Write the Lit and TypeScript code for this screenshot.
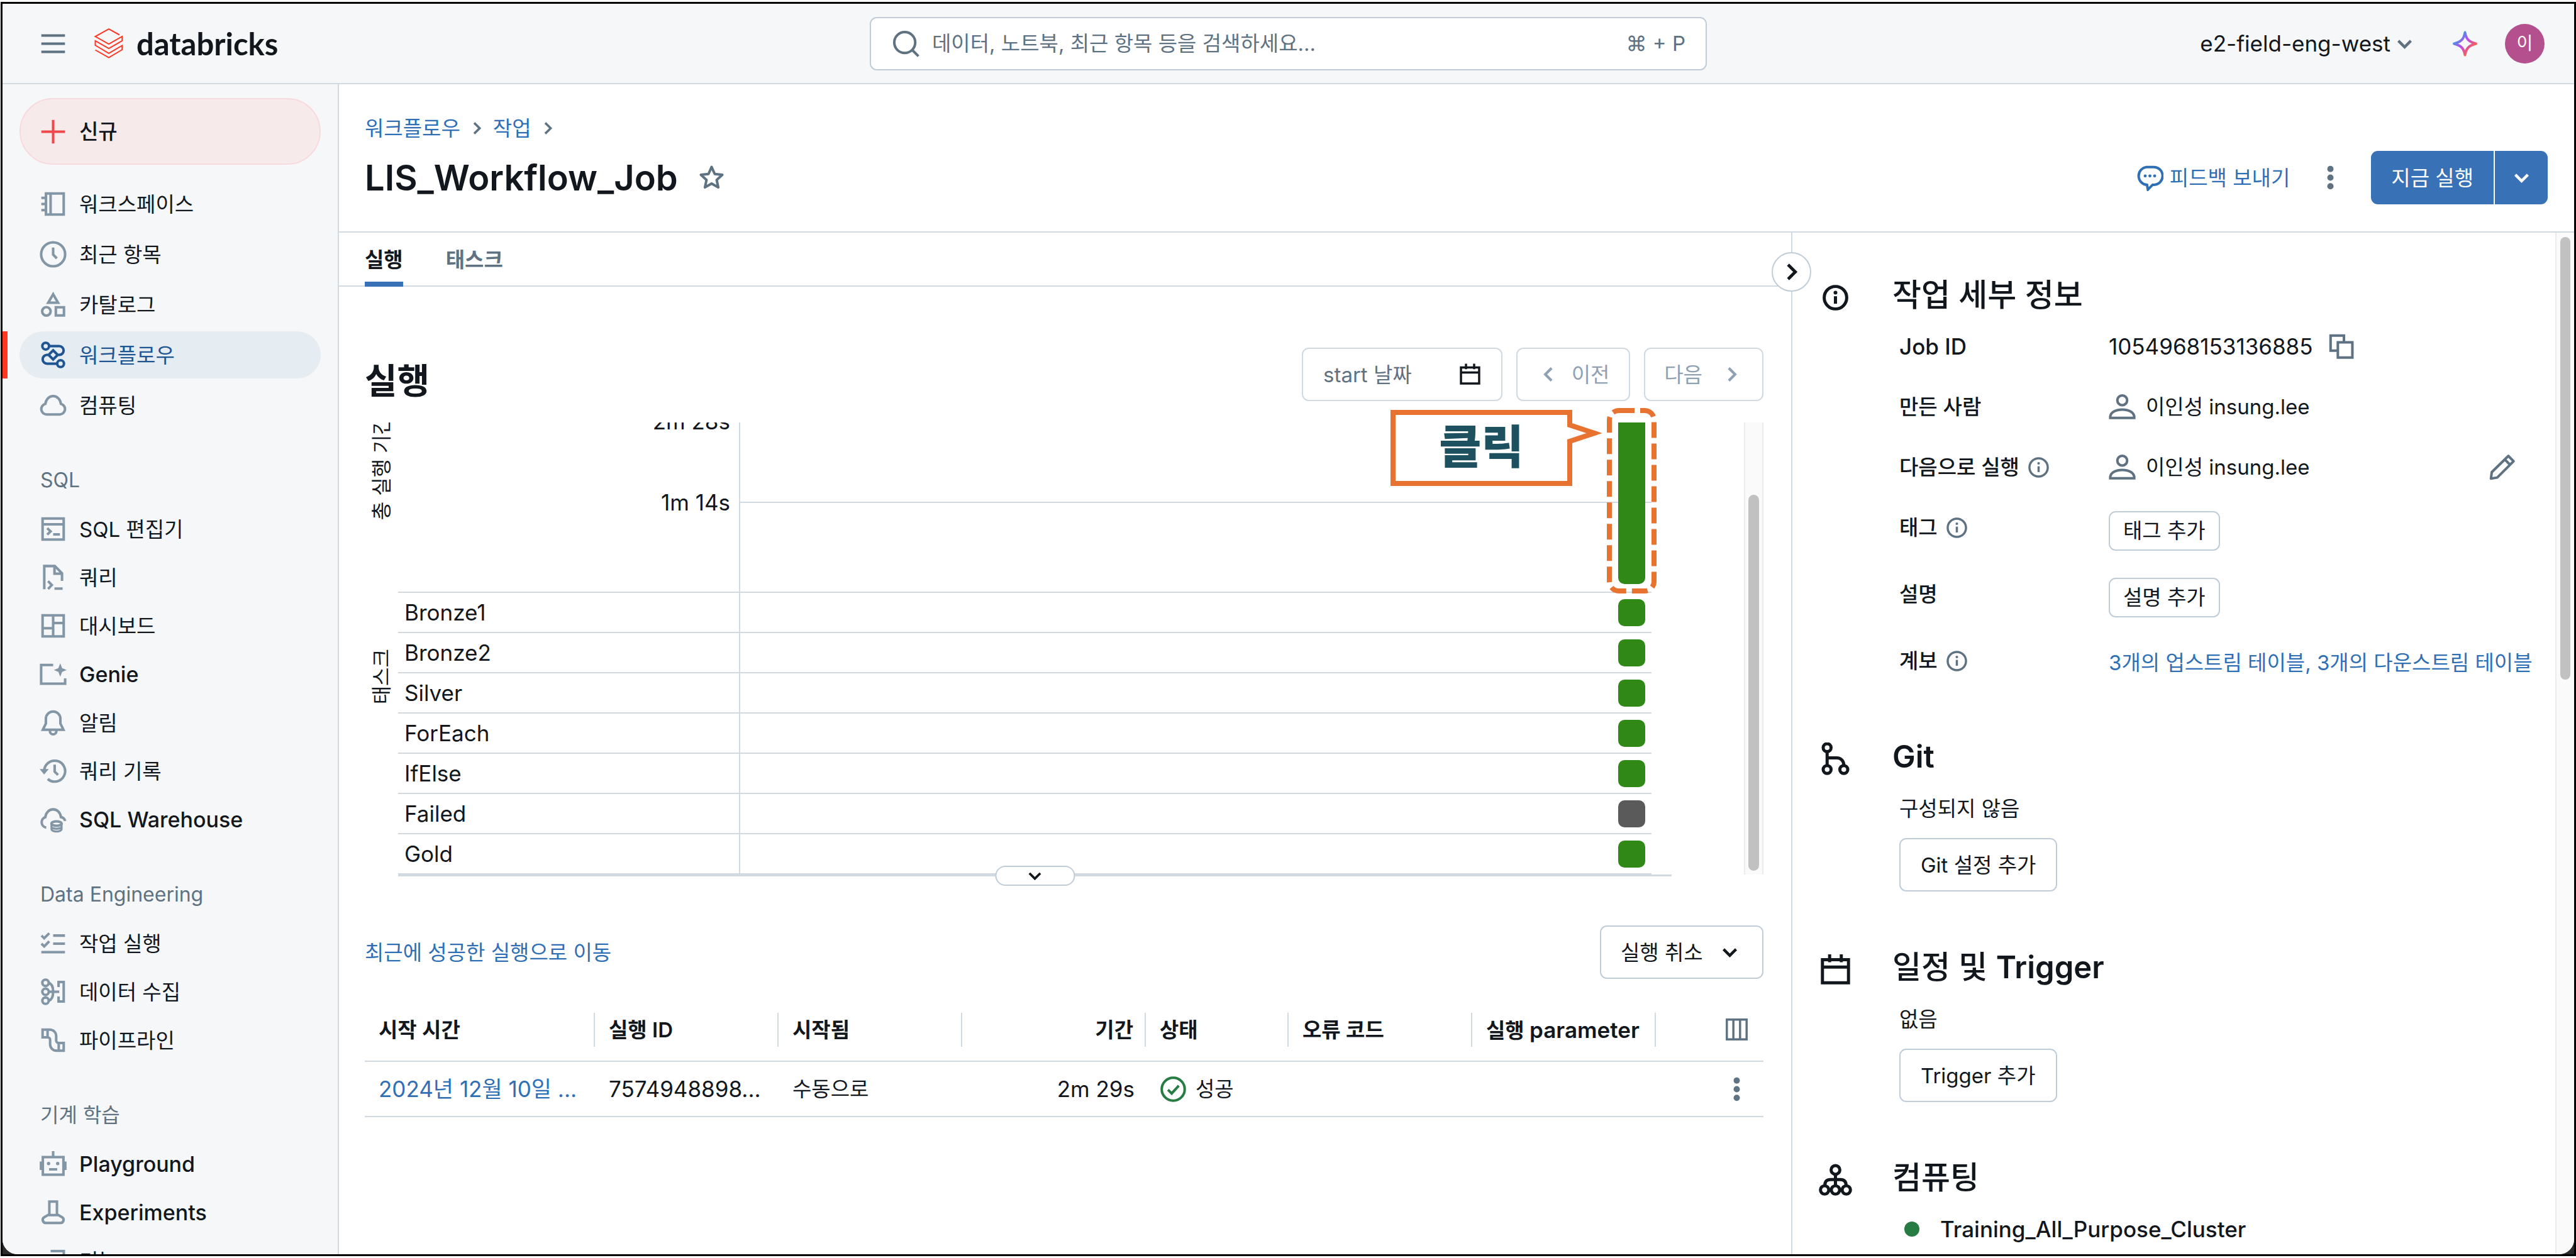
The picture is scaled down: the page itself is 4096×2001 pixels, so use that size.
import { LitElement, html, css, svg, nothing, TemplateResult } from "lit";
import { customElement } from "lit/decorators.js";
import { classMap } from "lit/directives/class-map.js";

const ICONS: Record<string, TemplateResult> = {
  menu: svg`<path d="M1 3.2h14M1 8h14M1 12.8h14"/>`,
  plus: svg`<path d="M8 1v14M1 8h14"/>`,
  notebook: svg`<path d="M3.75 1.75h10.5v12.5H3.75zM6.5 1.75v12.5M1 4.4h3M1 8h3M1 11.6h3"/>`,
  clock: svg`<circle cx="8" cy="8" r="7.1"/><path d="M8 4v4.2l2.2 2.2"/>`,
  catalog: svg`<path d="M8 1.9l2.9 5H5.1zM9.6 9.6h4.8v4.8H9.6z"/><circle cx="4" cy="12" r="2.5"/>`,
  workflow: svg`<circle cx="3.6" cy="2.8" r="2"/><circle cx="12.4" cy="13.2" r="2"/><path d="M5.6 2.8h6a2.6 2.6 0 0 1 0 5.2h-1M5.4 8h-1a2.6 2.6 0 0 0 0 5.2h6M8 5.3L10.7 8 8 10.7 5.3 8z"/>`,
  cloud: svg`<path d="M4 13.5a3.2 3.2 0 0 1-.6-6.3C3.700 4.600 5.600 2.600 8 2.600s4.300 2 4.600 4.600A3.200 3.200 0 0 1 12 13.500z"/>`,
  editor: svg`<path d="M1.75 1.75h12.5v12.5H1.75zM1.75 5.2h12.5M4.500 7.500l2 1.900-2 1.900M8 11.200h4"/>`,
  query: svg`<path d="M2.750 15V1.250H9l4.250 4.250V10M8.800 1.500v4.250H13M5 10.200l2.200 2.300L5 14.800M8.800 14.600h4.800"/>`,
  dashboard: svg`<path d="M1.750 1.750h12.500v12.500H1.750zM8 1.750v12.500M1.750 9.400H8M8 6.300h6.250"/>`,
  genie: svg`<path d="M8 2.500H.9v11.100h14.200V10.400"/><path class="solid" d="M12.200 1.500l1.100 2.900 2.700 1.100-2.700 1.100-1.100 2.900-1.100-2.900-2.700-1.100 2.700-1.100z"/>`,
  bell: svg`<path d="M8 1.400a4.300 4.300 0 0 0-4.300 4.300v2.800L1.900 12.200h12.200l-1.800-3.700V5.700A4.300 4.300 0 0 0 8 1.400zM6.100 12.400v.6a1.900 1.900 0 0 0 3.800 0v-.6"/>`,
  history: svg`<path d="M2.700 8.300A6.200 6.200 0 1 1 4.800 12.700M8.900 4.200v4.100l2 2"/><path class="solid" d="M0 6.800h5.400L2.700 10z"/>`,
  warehouse: svg`<path d="M3.900 12.800A3.200 3.200 0 0 1 3.400 6.600C3.700 4 5.600 2 8 2s4.300 2 4.600 4.600a3 3 0 0 1 2.500 2.300"/><ellipse cx="10" cy="10.400" rx="3" ry="1.300"/><path d="M7 10.400v3.200c0 .9 1.300 1.500 3 1.500s3-.6 3-1.500v-3.200M7 12.200c0 .8 1.300 1.300 3 1.300s3-.5 3-1.300" stroke-width="1.200"/>`,
  runs: svg`<path d="M8 3.400h7M8 8.200h7M1 13.200h14M1.100 3.400l1.600 1.600L5.700 2M1.100 8.200l1.600 1.600 3-3"/>`,
  ingest: svg`<circle cx="3.500" cy="2.700" r="1.900"/><circle cx="3.500" cy="8" r="1.900"/><circle cx="3.500" cy="13.300" r="1.900"/><path d="M5.400 2.700C7.600 3.400 8 5.400 8 8s-.4 4.600-2.600 5.300M5.400 8h6.200M11.200 5.200V2.250h3.050v11.500H11.200V10.800"/>`,
  pipeline: svg`<path d="M1.750 1.750H6a3.800 3.800 0 0 1 3.800 3.800v2.700a1.400 1.400 0 0 0 1.400 1.400h3.050v4.600H10A3.800 3.800 0 0 1 6.200 10.450v-2.700A1.400 1.400 0 0 0 4.800 6.350H1.750zM4.700 1.750v4.600M11.300 9.650v4.600"/>`,
  robot: svg`<path d="M1.900 3.900h12.200v10.400H1.900zM8 .4v3.500M.8 6.500v5M15.200 6.500v5M5.600 11.200h4.800"/><circle class="solid" cx="5.300" cy="7.700" r="1"/><circle class="solid" cx="10.700" cy="7.700" r="1"/>`,
  flask: svg`<path d="M5.750 1.600h4.500v7.500l3.100 1.800a1.800 1.800 0 0 1-.9 3.300H3.550a1.800 1.800 0 0 1-.9-3.300l3.100-1.800zM5.200 9.600h5.600"/>`,
  feature: svg`<path d="M6.500 2.200h7.800V10M1.750 5.700h9v9h-9z"/>`,
  search: svg`<circle cx="7.300" cy="7.300" r="6.200"/><path d="M11.800 11.800l3.600 3.600"/>`,
  down: svg`<path d="M3.700 6L8 10.300 12.300 6" stroke-width="1.900"/>`,
  right: svg`<path d="M6 3.700L10.300 8 6 12.300" stroke-width="1.800"/>`,
  left: svg`<path d="M10 3.700L5.700 8 10 12.300" stroke-width="1.800"/>`,
  star: svg`<path d="M8 1.700l1.850 4.150 4.500.5-3.350 3 .95 4.450L8 11.500l-3.950 2.300.95-4.450-3.350-3 4.500-.5z" stroke-linejoin="round"/>`,
  chat: svg`<path d="M6.300 12.300A5.300 5.300 0 0 1 6 1.750h4a5.250 5.250 0 0 1 .5 10.500H9.600L6.800 15.100z"/><circle class="solid" cx="5.200" cy="7" r=".9"/><circle class="solid" cx="8" cy="7" r=".9"/><circle class="solid" cx="10.800" cy="7" r=".9"/>`,
  kebab: svg`<circle class="solid" cx="8" cy="2.900" r="1.850"/><circle class="solid" cx="8" cy="8" r="1.850"/><circle class="solid" cx="8" cy="13.100" r="1.850"/>`,
  calendar: svg`<path d="M1.750 3.200h12.500v11.050H1.750zM1.750 6.700h12.500M5.200 .6v3.800M10.800 .6v3.800"/>`,
  info: svg`<circle cx="8" cy="8" r="6.300"/><path d="M8 7.200v4"/><circle class="solid" cx="8" cy="5.200" r=".9"/>`,
  infoLarge: svg`<circle cx="8" cy="8" r="5.400"/><path d="M8 7.300v3.600"/><circle class="solid" cx="8" cy="5.600" r=".9"/>`,
  git: svg`<circle cx="4" cy="2.500" r="1.900"/><circle cx="4" cy="13" r="1.900"/><circle cx="12" cy="13" r="1.900"/><path d="M4 4.400v6.700M4 7.400h4.700a3.300 3.300 0 0 1 3.300 3.300v.4"/>`,
  cluster: svg`<circle cx="8" cy="3" r="2.100"/><circle cx="2.800" cy="12.600" r="2"/><circle cx="8" cy="12.600" r="2"/><circle cx="13.200" cy="12.600" r="2"/><path d="M8 5.100v5.500M2.900 10.500c0-2 .9-2.900 2.700-2.900h4.800c1.800 0 2.700.9 2.700 2.900"/>`,
  user: svg`<circle cx="8" cy="4" r="2.900"/><path d="M.9 14.400v-.9C1.400 10.900 4.300 9.500 8 9.500s6.600 1.400 7.100 4v.9z"/>`,
  copy: svg`<path d="M5.500 10.300H1.400V1.400h7.900V5M5.700 5.400h8.600v9H5.700z"/>`,
  pencil: svg`<path d="M1.400 14.600l.5-3.800L11.700 1.200l3.100 3.100-9.700 9.700zM9.600 3.300l3.100 3.100" stroke-linejoin="round"/>`,
  columns: svg`<path d="M1.200 1.200h13.600v13.600H1.200zM5.700 1.200v13.600M10.300 1.200v13.600"/>`,
  check: svg`<circle cx="8" cy="8" r="6.800"/><path d="M4.900 8.300l2.200 2.200 4.200-4.600"/>`,
};

const icon = (name: string, size = "md") =>
  html`<svg class="icon ${size}" viewBox="0 0 16 16" aria-hidden="true">${ICONS[name]}</svg>`;

interface NavItem { icon: string; label: string; active?: boolean }
interface NavGroup { title?: string; items: NavItem[] }

const NAV: NavGroup[] = [
  {
    items: [
      { icon: "notebook", label: "워크스페이스" },
      { icon: "clock", label: "최근 항목" },
      { icon: "catalog", label: "카탈로그" },
      { icon: "workflow", label: "워크플로우", active: true },
      { icon: "cloud", label: "컴퓨팅" },
    ],
  },
  {
    title: "SQL",
    items: [
      { icon: "editor", label: "SQL 편집기" },
      { icon: "query", label: "쿼리" },
      { icon: "dashboard", label: "대시보드" },
      { icon: "genie", label: "Genie" },
      { icon: "bell", label: "알림" },
      { icon: "history", label: "쿼리 기록" },
      { icon: "warehouse", label: "SQL Warehouse" },
    ],
  },
  {
    title: "Data Engineering",
    items: [
      { icon: "runs", label: "작업 실행" },
      { icon: "ingest", label: "데이터 수집" },
      { icon: "pipeline", label: "파이프라인" },
    ],
  },
  {
    title: "기계 학습",
    items: [
      { icon: "robot", label: "Playground" },
      { icon: "flask", label: "Experiments" },
      { icon: "feature", label: "기능" },
    ],
  },
];

const TASKS = [
  { name: "Bronze1", ok: true },
  { name: "Bronze2", ok: true },
  { name: "Silver", ok: true },
  { name: "ForEach", ok: true },
  { name: "IfElse", ok: true },
  { name: "Failed", ok: false },
  { name: "Gold", ok: true },
];

@customElement("app-root")
export class AppRoot extends LitElement {
  static styles = css`
    :host {
      display: block;
      --text: #11171c;
      --muted: #5f7281;
      --link: #2f6fb5;
      --line: #d1d9e1;
      --control: #c0cdd8;
      --green: #308816;
      --callout: #e87331;
      font-family: Inter, "Noto Sans CJK KR", sans-serif;
      font-size: 33px;
      line-height: 40px;
      color: var(--text);
    }
    * { box-sizing: border-box; }
    h1, h2, h3, p, ul, dl, dd, dt { margin: 0; padding: 0; font-weight: inherit; }
    ul { list-style: none; }
    a { color: var(--link); text-decoration: none; white-space: nowrap; }
    button, input { font: inherit; color: inherit; margin: 0; }
    button {
      display: flex; align-items: center; padding: 0; border: 0;
      background: none; white-space: nowrap; cursor: pointer;
    }
    .latin { font-size: 35px; }
    .icon { display: block; flex: none; fill: none; stroke: currentColor; stroke-width: 1.5; }
    .icon .solid { fill: currentColor; stroke: none; }
    .xs { width: 32px; height: 32px; }
    .sm { width: 37px; height: 37px; }
    .md { width: 43px; height: 43px; }
    .lg { width: 53px; height: 53px; }

    .page { height: 100vh; padding: 3px 0 3px 1px; background: #fff; }
    .frame { height: 100%; border: 3px solid #000; background: #2b2b2b; }
    .window {
      height: 100%; display: flex; flex-direction: column; overflow: hidden;
      border-radius: 0 0 24px 24px; background: #fff;
    }

    .topbar {
      flex: none; height: 128px; display: grid; align-items: center;
      grid-template-columns: 1fr minmax(0, 1331px) 1fr;
      background: #f6f7f9; border-bottom: 2px solid var(--line);
    }
    .brand { display: flex; align-items: center; padding-left: 59px; color: var(--muted); }
    .logo { display: flex; align-items: center; gap: 20px; margin-left: 43px; color: var(--text);
      font-family: Lato, sans-serif; font-weight: 700; font-size: 49px; line-height: 60px; }
    .logo-mark { width: 48px; height: 48px; fill: none; stroke: #ff3621; stroke-width: 2; }
    .search {
      height: 85px; display: flex; align-items: center; gap: 20px; padding: 0 32px 0 34px;
      border: 2px solid var(--control); border-radius: 11px; background: #fff; color: var(--muted);
    }
    .search input { flex: 1; min-width: 0; border: 0; outline: 0; padding: 0; background: none; }
    .search input::placeholder { color: var(--muted); opacity: 1; }
    .account { display: flex; align-items: center; justify-content: flex-end; padding-right: 47px; }
    .workspace { gap: 4px; margin-right: 56px; }
    .workspace .icon { color: var(--muted); }
    .avatar {
      width: 63px; height: 63px; margin-left: 42px; border-radius: 50%;
      justify-content: center; background: #b5508f; color: #fff; font-size: 28px;
    }
    .spark { stroke: url(#spark); }

    .body { flex: 1; min-height: 0; display: flex; }
    .sidebar {
      flex: none; width: 535px; overflow: hidden; padding: 22px 27px 0;
      background: #f6f7f9; border-right: 2px solid var(--line);
    }
    .new {
      width: 100%; height: 106px; gap: 20px; padding-left: 30px; margin-bottom: 25px;
      border: 2px solid #f8dade; border-radius: 53px; background: #f6eaea; font-weight: 500;
    }
    .new .icon { color: #f0474b; }
    .group { display: flex; flex-direction: column; gap: 2px; margin-bottom: 45px; }
    .group.first { gap: 5px; }
    .group-title { height: 75px; padding-left: 33px; line-height: 73px; color: var(--muted); font-size: 32px; }
    .nav {
      position: relative; height: 75px; display: flex; align-items: center; gap: 20px;
      padding-left: 32px; border-radius: 38px; color: var(--text);
    }
    .nav.english { font-size: 34px; font-weight: 500; }
    .nav .icon { color: #8396a5; }
    .nav.active { background: #e5ecf2; color: #1f5592; }
    .nav.active .icon { color: #1f5592; }
    .nav.active::before {
      content: ""; position: absolute; left: -27px; top: 0; width: 8px; height: 100%; background: #ff3621;
    }

    .main { flex: 1; min-width: 0; display: flex; flex-direction: column; }
    .header { flex: none; padding: 50px 42px 43px 41px; border-bottom: 2px solid var(--line); }
    .crumbs { display: flex; align-items: center; gap: 10px; color: var(--muted); }
    .title-row { display: flex; align-items: center; justify-content: space-between; margin-top: 16px; height: 85px; }
    .title { display: flex; align-items: center; gap: 32px; }
    .title h1 { font-size: 56px; line-height: 72px; font-weight: 600; white-space: nowrap; }
    .title .icon { color: var(--muted); }
    .actions { display: flex; align-items: center; gap: 43px; color: var(--muted); }
    .feedback { display: flex; align-items: center; gap: 10px; }
    .run { display: flex; gap: 2px; height: 85px; color: #fff; }
    .run button { height: 100%; justify-content: center; background: #3871b6; }
    .run .now { padding: 0 32px; border-radius: 11px 0 0 11px; }
    .run .more { width: 84px; border-radius: 0 11px 11px 0; }

    .split { flex: 1; min-height: 0; display: flex; }
    .runs { flex: 1; min-width: 0; }
    .tabs { height: 86px; display: flex; gap: 68px; padding-left: 41px; border-bottom: 2px solid var(--line); }
    .tab { height: 86px; padding-top: 8px; border-bottom: 8px solid transparent; color: var(--muted); font-weight: 600; }
    .tab.on { color: var(--text); border-color: #3871b6; }
    .content { padding: 97px 44px 0 41px; }
    .toolbar { display: flex; align-items: flex-end; gap: 22px; }
    .toolbar h2 { flex: 1; font-size: 56px; line-height: 64px; font-weight: 700; }
    .outline { height: 85px; border: 2px solid var(--control); border-radius: 11px; background: #fff; }
    .date { width: 319px; display: flex; align-items: center; padding: 0 31px 0 32px; border-color: var(--line); }
    .date input { flex: 1; width: 0; border: 0; outline: 0; padding: 0; background: none; }
    .date input::placeholder { color: var(--muted); opacity: 1; }
    .pager { border-color: var(--line); color: #8fa1b2; justify-content: center; }
    .prev { width: 181px; gap: 18px; }
    .next { width: 190px; gap: 28px; }

    .chart { position: relative; margin-top: 34px; }
    .viewport { display: flex; height: 719px; overflow: hidden; }
    .axis { flex: none; width: 53px; display: grid; grid-template-rows: 269px 1fr; justify-items: center; }
    .axis span {
      writing-mode: vertical-rl; text-orientation: sideways; transform: rotate(180deg);
      white-space: nowrap; font-size: 32px;
    }
    .axis .duration { align-self: end; margin-bottom: 114px; }
    .axis .tasks { align-self: start; margin-top: 91px; }
    .plot { flex: 1; min-width: 0; margin-right: 147px; }
    .durations { height: 269px; display: grid; grid-template-columns: 542px 1fr; overflow: hidden; }
    .ticks { display: flex; flex-direction: column; justify-content: flex-end; padding: 0 14px 14px 0; text-align: right; }
    .ticks span { flex: none; height: 129px; }
    .ticks span b { display: block; font-weight: 400; margin-top: -22px; }
    .bars { display: grid; border-left: 2px solid var(--line); min-height: 0; }
    .grid-lines, .columns { grid-area: 1 / 1; display: flex; min-height: 0; }
    .grid-lines { flex-direction: column; justify-content: flex-end; padding-bottom: 14px; height: 269px; }
    .grid-lines i { flex: none; height: 129px; border-top: 2px solid var(--line); }
    .columns { justify-content: flex-end; align-items: flex-end; padding: 0 10px 12px; height: 269px; }
    .bar { flex: none; width: 43px; height: 260px; padding: 0; border-radius: 0 0 10px 10px; background: var(--green); }
    .task {
      height: 64px; display: grid; grid-template-columns: 542px 1fr; border-top: 2px solid var(--line);
    }
    .task:last-child { height: 66px; border-bottom: 2px solid var(--line); }
    .task .name { padding-left: 10px; line-height: 62px; }
    .task .cell {
      display: flex; align-items: center; justify-content: flex-end; padding-right: 10px;
      border-left: 2px solid var(--line);
    }
    .square { width: 43px; height: 43px; border-radius: 10px; background: var(--green); }
    .square.skipped { background: #5a5a5a; }
    .track { flex: none; width: 31px; border: solid #ececec; border-width: 0 2px; background: #fafafa; }
    .thumb { width: 17px; height: 598px; margin: 115px auto 0; border-radius: 9px; background: #c1c1c1; }
    .baseline { position: relative; height: 3px; margin: 0 146px 0 53px; background: var(--line); }
    .expand {
      position: absolute; left: 50%; top: -14px; width: 127px; height: 32px; transform: translateX(-50%);
      justify-content: center; border: 2px solid var(--control); border-radius: 16px; background: #fff;
    }
    .callout { position: absolute; right: 257px; top: -20px; width: 336px; height: 121px; }
    .callout svg, .highlight { display: block; fill: #fff; stroke: var(--callout); stroke-width: 8; }
    .callout svg { width: 336px; height: 121px; }
    .callout span {
      position: absolute; left: 0; top: 0; width: 289px; line-height: 118px; text-align: center;
      font-size: 73px; font-weight: 800; color: #1d5160;
    }
    .highlight { position: absolute; right: 170px; top: -23px; width: 79px; height: 295px; fill: none; }

    .table-bar { display: flex; align-items: center; justify-content: space-between; margin-top: 78px; }
    .cancel { width: 260px; gap: 24px; padding-left: 31px; }
    .table { width: 100%; margin-top: 31px; border-collapse: collapse; table-layout: fixed; }
    .table th { padding: 0; height: 100px; font-weight: 600; text-align: left; border-bottom: 2px solid var(--line); }
    .table th div { height: 54px; line-height: 54px; padding: 0 22px; border-right: 2px solid var(--line); white-space: nowrap; }
    .table td { padding: 0 22px; height: 88px; border-bottom: 2px solid var(--line); overflow: hidden; white-space: nowrap; }
    .table .num { text-align: right; padding-right: 18px; }
    .table th .num { padding-right: 18px; }
    .table .tool { padding: 0 24px 0 0; color: var(--muted); }
    .table .tool button { margin-left: auto; }
    .table td.tool { padding-right: 21px; }
    .status { display: flex; align-items: center; gap: 14px; }
    .status .icon { color: #277c43; }
    .w-start { width: 366px; }
    .w-col { width: 292px; }
    .w-state { width: 227px; }

    .details { position: relative; flex: none; width: 1245px; display: flex; border-left: 2px solid var(--line); }
    .collapse {
      position: absolute; left: -33px; top: 31px; width: 63px; height: 63px; justify-content: center;
      border: 2px solid var(--control); border-radius: 50%; background: #fff;
    }
    .sections { flex: 1; min-width: 0; overflow: hidden; padding: 67px 41px 0 42px; }
    .section { display: grid; grid-template-columns: 53px 1fr; column-gap: 64px; margin-bottom: 88px; }
    .mark { height: 72px; display: flex; align-items: center; justify-content: center; }
    .section h2 { font-size: 50px; line-height: 64px; font-weight: 500; }
    .section h2 span { font-size: 49px; font-weight: 600; }
    .block { padding-left: 11px; }
    .rows { margin-top: 24px; display: grid; grid-template-columns: 333px 1fr; row-gap: 43px; line-height: 53px; }
    .rows dt { display: flex; align-items: center; gap: 12px; height: 53px; font-weight: 500; }
    .rows dt .icon, .rows dd .icon { color: var(--muted); }
    .rows dd { display: flex; align-items: center; gap: 16px; min-height: 53px; }
    .rows .lineage { min-height: 58px; }
    .rows .edit { margin-left: auto; margin-right: 27px; }
    .copy { margin-left: 8px; }
    .small { height: 63px; padding: 0 21px; }
    .empty { margin-top: 30px; }
    .add { margin-top: 27px; padding: 0 32px; }
    .cluster-row { display: flex; align-items: center; gap: 33px; margin-top: 30px; padding-left: 8px; font-weight: 500; }
    .dot { width: 24px; height: 24px; border-radius: 50%; background: #277c43; }
    .page-track { flex: none; width: 30px; border-left: 2px solid #ececec; background: #fafafa; }
    .page-track .thumb { width: 16px; height: 704px; margin-top: 7px; }
  `;

  private nav(item: NavItem) {
    const english = /^[A-Za-z ]+$/.test(item.label);
    return html`<li>
      <a href="#" class=${classMap({ nav: true, active: !!item.active, english })}>${icon(item.icon)}${item.label}</a>
    </li>`;
  }

  private group(g: NavGroup) {
    return html`<ul class=${classMap({ group: true, first: !g.title })}>
      ${g.title ? html`<li class="group-title">${g.title}</li>` : nothing}
      ${g.items.map((i) => this.nav(i))}
    </ul>`;
  }

  private topbar() {
    return html`<header class="topbar">
      <div class="brand">
        <button aria-label="메뉴">${icon("menu")}</button>
        <div class="logo">
          <svg class="logo-mark" viewBox="0 0 48 48" aria-hidden="true">
            <path d="M41 10.500L24 1.200 2.500 13 24 25 45.200 13v6.800L24 32 2.500 20v7L24 39.800 45.200 27.500v6.500L24 46.500 2.500 34.500" />
          </svg>
          <span>databricks</span>
        </div>
      </div>
      <label class="search">
        ${icon("search")}
        <input type="search" aria-label="검색" placeholder="데이터, 노트북, 최근 항목 등을 검색하세요..." />
        <span>⌘ + P</span>
      </label>
      <div class="account">
        <button class="workspace latin">e2-field-eng-west ${icon("down", "sm")}</button>
        <button aria-label="Assistant">
          <svg class="icon md" viewBox="0 0 16 16" aria-hidden="true">
            <defs>
              <linearGradient id="spark" x1="0" y1="0" x2="1" y2="1">
                <stop offset="0.200" stop-color="#4299e0" />
                <stop offset="0.450" stop-color="#b44ff0" />
                <stop offset="0.800" stop-color="#ff5f46" />
              </linearGradient>
            </defs>
            <path class="spark" stroke-linejoin="round" d="M8 1.300c.7 3.900 2 5.500 6.500 6.700C10 9.200 8.700 10.800 8 14.700 7.300 10.800 6 9.200 1.500 8 6 6.800 7.300 5.200 8 1.300z" />
          </svg>
        </button>
        <button class="avatar">이</button>
      </div>
    </header>`;
  }

  private chart() {
    return html`<div class="chart">
      <div class="viewport">
        <div class="axis"><span class="duration">총 실행 기간</span><span class="tasks">태스크</span></div>
        <div class="plot">
          <div class="durations">
            <div class="ticks latin"><span><b>2m 28s</b></span><span><b>1m 14s</b></span></div>
            <div class="bars">
              <div class="grid-lines"><i></i><i></i></div>
              <div class="columns"><button class="bar" aria-label="2m 29s"></button></div>
            </div>
          </div>
          <div>
            ${TASKS.map(
              (t) => html`<div class="task">
                <span class="name latin">${t.name}</span>
                <span class="cell"><button class=${classMap({ square: true, skipped: !t.ok })} aria-label=${t.name}></button></span>
              </div>`
            )}
          </div>
        </div>
        <div class="track"><div class="thumb"></div></div>
      </div>
      <div class="baseline"><button class="expand" aria-label="펼치기">${icon("down", "xs")}</button></div>
      <div class="callout">
        <svg viewBox="0 0 336 121" aria-hidden="true"><path d="M4 4H285V24L324 37 285 50V117H4z" /></svg>
        <span>클릭</span>
      </div>
      <svg class="highlight" viewBox="0 0 79 295" aria-hidden="true">
        <rect x="4" y="4" width="71" height="287" rx="15" stroke-dasharray="25 9" />
      </svg>
    </div>`;
  }

  private runTable() {
    return html`<table class="table">
      <colgroup>
        <col class="w-start" /><col class="w-col" /><col class="w-col" /><col class="w-col" />
        <col class="w-state" /><col class="w-col" /><col class="w-col" /><col />
      </colgroup>
      <thead>
        <tr>
          <th><div>시작 시간</div></th>
          <th><div>실행 ID</div></th>
          <th><div>시작됨</div></th>
          <th><div class="num">기간</div></th>
          <th><div>상태</div></th>
          <th><div>오류 코드</div></th>
          <th><div>실행 <span class="latin">parameter</span></div></th>
          <th class="tool"><button aria-label="열">${icon("columns", "sm")}</button></th>
        </tr>
      </thead>
      <tbody>
        <tr>
          <td class="latin"><a href="#">2024년 12월 10일 ...</a></td>
          <td class="latin">7574948898...</td>
          <td>수동으로</td>
          <td class="num latin">2m 29s</td>
          <td><span class="status">${icon("check")}성공</span></td>
          <td></td>
          <td></td>
          <td class="tool"><button aria-label="작업">${icon("kebab")}</button></td>
        </tr>
      </tbody>
    </table>`;
  }

  private details() {
    const info = icon("info", "sm");
    return html`<aside class="details">
      <button class="collapse" aria-label="접기">${icon("right", "md")}</button>
      <div class="sections">
        <section class="section">
          <div class="mark">${icon("infoLarge", "lg")}</div>
          <div>
            <h2>작업 세부 정보</h2>
            <dl class="block rows">
              <dt class="latin">Job ID</dt>
              <dd class="latin">1054968153136885 <button class="copy" aria-label="복사">${icon("copy")}</button></dd>
              <dt>만든 사람</dt>
              <dd>${icon("user")}이인성 insung.lee</dd>
              <dt>다음으로 실행 ${info}</dt>
              <dd>${icon("user")}이인성 insung.lee <button class="edit" aria-label="편집">${icon("pencil")}</button></dd>
              <dt>태그 ${info}</dt>
              <dd><button class="outline small">태그 추가</button></dd>
              <dt>설명</dt>
              <dd><button class="outline small">설명 추가</button></dd>
              <dt>계보 ${info}</dt>
              <dd class="lineage"><a href="#">3개의 업스트림 테이블, 3개의 다운스트림 테이블</a></dd>
            </dl>
          </div>
        </section>
        <section class="section">
          <div class="mark">${icon("git", "lg")}</div>
          <div>
            <h2><span>Git</span></h2>
            <div class="block">
              <p class="empty">구성되지 않음</p>
              <button class="outline add">Git 설정 추가</button>
            </div>
          </div>
        </section>
        <section class="section">
          <div class="mark">${icon("calendar", "lg")}</div>
          <div>
            <h2>일정 및 <span>Trigger</span></h2>
            <div class="block">
              <p class="empty">없음</p>
              <button class="outline add">Trigger 추가</button>
            </div>
          </div>
        </section>
        <section class="section">
          <div class="mark">${icon("cluster", "lg")}</div>
          <div>
            <h2>컴퓨팅</h2>
            <div class="block">
              <p class="cluster-row latin"><span class="dot"></span>Training_All_Purpose_Cluster</p>
            </div>
          </div>
        </section>
      </div>
      <div class="page-track"><div class="thumb"></div></div>
    </aside>`;
  }

  render() {
    return html`<div class="page"><div class="frame"><div class="window">
      ${this.topbar()}
      <div class="body">
        <nav class="sidebar">
          <button class="new">${icon("plus")}신규</button>
          ${NAV.map((g) => this.group(g))}
        </nav>
        <main class="main">
          <div class="header">
            <div class="crumbs">
              <a href="#">워크플로우</a>${icon("right", "xs")}<a href="#">작업</a>${icon("right", "xs")}
            </div>
            <div class="title-row">
              <div class="title">
                <h1>LIS_Workflow_Job</h1>
                <button aria-label="즐겨찾기">${icon("star")}</button>
              </div>
              <div class="actions">
                <a class="feedback" href="#">${icon("chat")}피드백 보내기</a>
                <button aria-label="더 보기">${icon("kebab")}</button>
                <div class="run">
                  <button class="now">지금 실행</button>
                  <button class="more" aria-label="실행 옵션">${icon("down", "sm")}</button>
                </div>
              </div>
            </div>
          </div>
          <div class="split">
            <div class="runs">
              <div class="tabs" role="tablist">
                <button class="tab on" role="tab" aria-selected="true">실행</button>
                <button class="tab" role="tab" aria-selected="false">태스크</button>
              </div>
              <div class="content">
                <div class="toolbar">
                  <h2>실행</h2>
                  <label class="outline date">
                    <input type="text" aria-label="start 날짜" placeholder="start 날짜" />${icon("calendar", "sm")}
                  </label>
                  <button class="outline pager prev">${icon("left", "sm")}이전</button>
                  <button class="outline pager next">다음${icon("right", "sm")}</button>
                </div>
                ${this.chart()}
                <div class="table-bar">
                  <a href="#">최근에 성공한 실행으로 이동</a>
                  <button class="outline cancel">실행 취소 ${icon("down", "sm")}</button>
                </div>
                ${this.runTable()}
              </div>
            </div>
            ${this.details()}
          </div>
        </main>
      </div>
    </div></div></div>`;
  }
}
